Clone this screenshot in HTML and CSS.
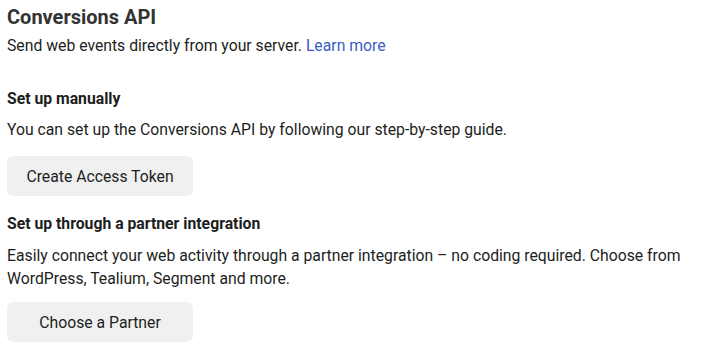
FILE: index.html
```html
<!DOCTYPE html>
<html>
<head>
<meta charset="utf-8">
<link rel="stylesheet" href="styles.css">
</head>
<body>
<div class="page">
  <h1 class="title">Conversions API</h1>
  <p class="text intro">Send web events directly from your server. <a class="link" href="#">Learn more</a></p>

  <section class="section manual">
    <h2 class="heading">Set up manually</h2>
    <p class="text">You can set up the Conversions API by following our step-by-step guide.</p>
    <button class="btn">Create Access Token</button>
  </section>

  <section class="section partner">
    <h2 class="heading">Set up through a partner integration</h2>
    <p class="text">Easily connect your web activity through a partner integration – no coding required. Choose from WordPress, Tealium, Segment and more.</p>
    <button class="btn">Choose a Partner</button>
  </section>
</div>
</body>
</html>
```
FILE: styles.css
```css
html, body {
  margin: 0;
  padding: 0;
  background: #ffffff;
}
body {
  font-family: Roboto, "Liberation Sans", Arial, sans-serif;
  color: #1c1e21;
}
.page {
  padding: 5px 7px 0 7px;
}
.title {
  margin: 0;
  font-size: 20px;
  font-weight: 700;
  line-height: 24px;
  color: #333;
}
.text {
  margin: 0;
  font-size: 15.75px;
  line-height: 23px;
  color: #1c1e21;
}
.intro {
  margin-top: 5px;
}
.link {
  color: #3b5cc4;
  text-decoration: none;
}
.section {
  display: flex;
  flex-direction: column;
  align-items: flex-start;
}
.manual {
  margin-top: 32px;
}
.partner {
  margin-top: 18px;
}
.heading {
  margin: 0;
  font-size: 15.75px;
  font-weight: 700;
  line-height: 20px;
  color: #1c1e21;
}
.manual .text {
  margin-top: 9px;
}
.partner .text {
  margin-top: 10px;
}
.btn {
  width: 186px;
  height: 40px;
  border: none;
  border-radius: 6px;
  background: #f0f0f0;
  font-family: Roboto, "Liberation Sans", Arial, sans-serif;
  font-size: 15.75px;
  color: #1c1e21;
  padding: 0;
}
.manual .btn {
  margin-top: 15px;
}
.partner .btn {
  margin-top: 12px;
}
```
